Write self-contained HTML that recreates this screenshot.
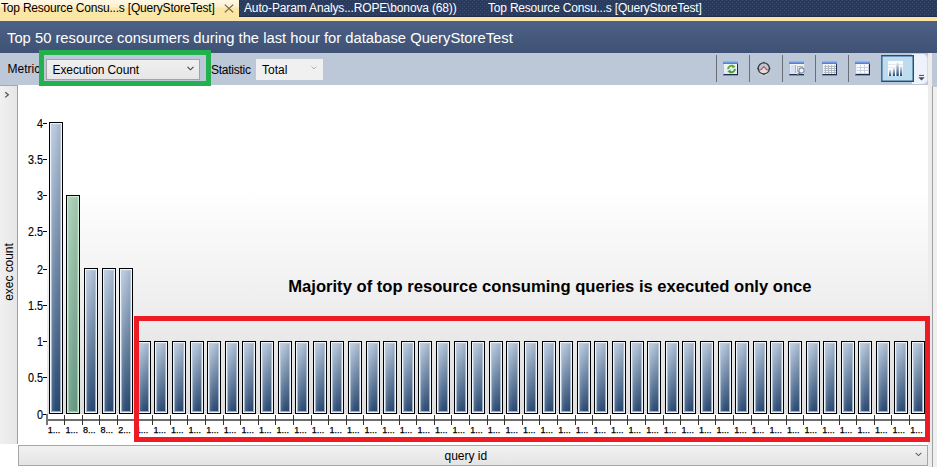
<!DOCTYPE html><html><head><meta charset="utf-8"><style>
*{margin:0;padding:0;box-sizing:border-box}
html,body{width:937px;height:467px;overflow:hidden;background:#fff}
body{position:relative;font-family:"Liberation Sans",sans-serif;}
.a{position:absolute}
.t{position:absolute;white-space:pre;line-height:1}
.bar{position:absolute;border:1px solid #000;}
.bar i{position:absolute;left:0;top:0;right:0;bottom:0;border:1px solid #eef3f9;box-shadow:inset 0 0 0 1px rgba(190,206,226,.75);
 background:linear-gradient(90deg,rgba(255,255,255,.18),rgba(255,255,255,0) 45%,rgba(0,0,0,.10)),linear-gradient(180deg,#b6c7db,#2b4b73);}
.bar.g i{border-color:#cdeed6;box-shadow:inset 0 0 0 1px rgba(170,215,185,.7);background:linear-gradient(90deg,rgba(255,255,255,.15),rgba(255,255,255,0) 45%,rgba(0,0,0,.06)),linear-gradient(180deg,#a9cdb6,#6a9a86);}
.sh{position:absolute;background:rgba(0,0,0,.09)}
.yl{position:absolute;font-size:12px;-webkit-text-stroke:0.15px #000;transform:scaleX(0.9);transform-origin:100% 50%;line-height:1;text-align:right;width:30px;color:#000}
.xl{position:absolute;font-size:9px;line-height:1;color:#000;white-space:pre;-webkit-text-stroke:0.25px #000}
.tk{position:absolute;background:#555}
.sep{position:absolute;top:55px;width:1px;height:27px;background:#6a6e75}
</style></head><body>
<svg class="a" style="left:0;top:0" width="937" height="17"><defs><pattern id="dots" width="4" height="4" patternUnits="userSpaceOnUse"><rect width="4" height="4" fill="#2a3a5a"/><rect x="2" y="0" width="1" height="1" fill="#3a4d71"/><rect x="0" y="2" width="1" height="1" fill="#3a4d71"/></pattern></defs><rect width="937" height="17" fill="url(#dots)"/></svg>
<div class="a" style="left:0;top:16px;width:937px;height:1px;background:#22304c"></div>
<div class="a" style="left:0;top:0;width:239px;height:17px;background:linear-gradient(180deg,#fff8e6 0,#fdf0cf 7px,#fbe6a6 8px,#fbe6a6 17px)"></div>
<div class="a" style="left:0;top:17px;width:937px;height:4px;background:#f9e5a5"></div>
<div class="t" style="left:1px;top:2px;font-size:12px;color:#000;letter-spacing:-0.2px">Top Resource Consu...s [QueryStoreTest]</div>
<svg class="a" style="left:224px;top:4px" width="10" height="9" viewBox="0 0 10 9"><path d="M0.8 0.6 L9.2 8.4 M9.2 0.6 L0.8 8.4" stroke="#6e6048" stroke-width="1.15"/></svg>
<div class="t" style="left:244px;top:2px;font-size:12px;color:#fff;letter-spacing:-0.15px">Auto-Param Analys...ROPE\bonova (68))</div>
<div class="t" style="left:488px;top:2px;font-size:12px;color:#fff;letter-spacing:-0.2px">Top Resource Consu...s [QueryStoreTest]</div>
<div class="a" style="left:0;top:21px;width:937px;height:32px;background:linear-gradient(180deg,#4d6186,#3f5275)"></div>
<div class="t" style="left:7px;top:30.4px;font-size:15.5px;color:#fff;transform:scaleX(0.953);transform-origin:0 0">Top 50 resource consumers during the last hour for database QueryStoreTest</div>
<div class="a" style="left:0;top:53px;width:928px;height:32px;background:#bcc7d8"></div>
<div class="a" style="left:932px;top:53px;width:5px;height:33px;background:#bcc7d8"></div>
<div class="a" style="left:928px;top:53px;width:4px;height:414px;background:#ececec"></div>
<div class="t" style="left:7.5px;top:63.2px;font-size:12px;color:#000">Metric</div>
<div class="a" style="left:46px;top:59px;width:154px;height:21px;border:1px solid #a3a3a3;background:linear-gradient(180deg,#f0f0f0,#e6e6e6)"></div>
<div class="t" style="left:52.5px;top:63.6px;font-size:12px;color:#000;letter-spacing:-0.1px">Execution Count</div>
<svg class="a" style="left:187px;top:66px" width="7" height="5" viewBox="0 0 7 5"><path d="M0.5 0.8 L3.5 3.8 L6.5 0.8" fill="none" stroke="#444" stroke-width="1.1"/></svg>
<div class="a" style="left:39px;top:50px;width:172px;height:36px;border:5px solid #22b14c"></div>
<div class="t" style="left:211px;top:63.6px;font-size:12px;color:#000;letter-spacing:-0.25px">Statistic</div>
<div class="a" style="left:256px;top:59px;width:67px;height:21px;background:#f0f0f0"></div>
<div class="t" style="left:262px;top:63.6px;font-size:12px;color:#000">Total</div>
<svg class="a" style="left:311px;top:66px" width="6" height="4" viewBox="0 0 6 4"><path d="M0.5 0.5 L3 3 L5.5 0.5" fill="none" stroke="#b0b0b0" stroke-width="1"/></svg>
<div class="sep" style="left:716px"></div>
<div class="sep" style="left:749px"></div>
<div class="sep" style="left:782px"></div>
<div class="sep" style="left:815px"></div>
<div class="sep" style="left:848px"></div>
<div class="a" style="left:723px;top:61px;width:15px;height:14px;border-left:1px solid #b8c4d6;border-right:1px solid #1c2c4c;border-bottom:1px solid #1c2c4c;box-shadow:0 1px 0 rgba(40,55,85,.35);background:linear-gradient(180deg,#f6f8fb,#e2e8f2)"><div class="a" style="left:-1px;top:0;width:15px;height:3px;background:linear-gradient(180deg,#9cc0f6,#3f74dc)"></div><svg class="a" style="left:2px;top:3px" width="11" height="10" viewBox="0 0 11 10"><path d="M2.2 5.2 A3.2 3.2 0 0 1 7.6 2.6" fill="none" stroke="#5cae3c" stroke-width="2"/><path d="M8.8 4.8 A3.2 3.2 0 0 1 3.4 7.4" fill="none" stroke="#4a9e2e" stroke-width="2"/><path d="M6 0.6 L9.6 2.6 L6.6 4.6Z" fill="#5cae3c"/><path d="M5 9.4 L1.4 7.4 L4.4 5.4Z" fill="#4a9e2e"/></svg></div>
<svg class="a" style="left:756px;top:61px" width="16" height="16" viewBox="0 0 16 16"><path d="M2.2 9 L5 9 L7.8 6 L10.6 9 L13.4 9 A5.6 5.6 0 0 1 2.2 9Z" fill="#dedede"/><path d="M2.3 8.8 L5 8.6 L7.8 5.6 L10.6 8.6 L13.3 8.8" fill="none" stroke="#c65555" stroke-width="1.2"/><circle cx="7.8" cy="7.4" r="5.6" fill="none" stroke="#3a3a3a" stroke-width="1.3"/><path d="M7.8 0.8 V2 M7.8 12.8 V14 M1.2 7.4 H2.4 M13.2 7.4 H14.4" stroke="#3a3a3a" stroke-width="1.1"/></svg>
<div class="a" style="left:789px;top:61px;width:15px;height:14px;border-left:1px solid #b8c4d6;border-bottom:1px solid #1c2c4c;box-shadow:0 1px 0 rgba(40,55,85,.35);background:linear-gradient(180deg,#f6f8fb,#e2e8f2)"><div class="a" style="left:-1px;top:0;width:15px;height:3px;background:linear-gradient(180deg,#9cc0f6,#3f74dc)"></div><div class="a" style="left:1px;top:4px;width:5px;height:8px;background:#d4e2f6;border-right:1px solid #a8b8d0"></div><div class="a" style="left:7px;top:5px;width:6px;height:6px;background:#f2f0e6;border:1px solid #b8b8a8"></div><svg class="a" style="left:6px;top:6px" width="10" height="9" viewBox="0 0 10 9"><circle cx="5.5" cy="3.5" r="2.6" fill="#eef3f8" stroke="#8090a8" stroke-width="1.1"/><path d="M3.8 5.5 L1 8.5" stroke="#6a7890" stroke-width="1.6"/></svg></div>
<div class="a" style="left:822px;top:61px;width:15px;height:14px;border-left:1px solid #b8c4d6;border-right:1px solid #1c2c4c;border-bottom:1px solid #1c2c4c;box-shadow:0 1px 0 rgba(40,55,85,.35);background:linear-gradient(180deg,#f6f8fb,#e2e8f2)"><div class="a" style="left:-1px;top:0;width:15px;height:3px;background:linear-gradient(180deg,#9cc0f6,#3f74dc)"></div><div class="a" style="left:1px;top:4px;width:12px;height:9px;background-color:#f6f6f6;background-image:linear-gradient(90deg,#b4bac2 1px,transparent 1px),linear-gradient(180deg,#b4bac2 1px,transparent 1px);background-size:3px 2px;background-position:1px 1px"></div></div>
<div class="a" style="left:855px;top:61px;width:15px;height:14px;border-left:1px solid #b8c4d6;border-right:1px solid #1c2c4c;border-bottom:1px solid #1c2c4c;box-shadow:0 1px 0 rgba(40,55,85,.35);background:linear-gradient(180deg,#f6f8fb,#e2e8f2)"><div class="a" style="left:-1px;top:0;width:15px;height:3px;background:linear-gradient(180deg,#9cc0f6,#3f74dc)"></div><div class="a" style="left:1px;top:4px;width:12px;height:9px;background-color:#fafbfd;background-image:linear-gradient(90deg,#c8d2e2 1px,transparent 1px),linear-gradient(180deg,#c8d2e2 1px,transparent 1px);background-size:4px 3px;background-position:3px 2px"></div></div>
<div class="a" style="left:912px;top:54px;width:16px;height:30px;background:#edf2fb;border-radius:0 5px 5px 0;border-right:1px solid #d4dbe8"></div>
<div class="a" style="left:881px;top:55px;width:33px;height:27px;border:1px solid #1d4f80;border-left-color:#4a6a8a;background:#bddcef;box-shadow:inset 0 0 0 0.5px #2a5a88"></div>
<svg class="a" style="left:888px;top:61px" width="15" height="15" viewBox="0 0 15 15"><defs><linearGradient id="cg" x1="0" y1="0" x2="0" y2="1"><stop offset="0" stop-color="#ffffff"/><stop offset="1" stop-color="#1a4478"/></linearGradient></defs><rect x="0" y="0" width="15" height="15" fill="#fbfcfd"/><path d="M0 3.5 H15 M0 6.5 H15" stroke="#e6e9ee" stroke-width="1"/><rect x="1" y="8" width="2.2" height="7" fill="url(#cg)"/><rect x="4.8" y="6" width="2.2" height="9" fill="url(#cg)"/><rect x="8.4" y="0.5" width="2.4" height="14.5" fill="url(#cg)"/><rect x="12" y="4.5" width="2.2" height="10.5" fill="url(#cg)"/></svg>
<svg class="a" style="left:918px;top:74px" width="7" height="7" viewBox="0 0 7 7"><path d="M1 1.4 H6" stroke="#4a4a4a" stroke-width="1"/><path d="M0.3 3.2 H6.7 L3.5 6.6Z" fill="#4a4a4a"/></svg>
<div class="a" style="left:0;top:85px;width:18px;height:359px;background:linear-gradient(90deg,#f0f0f0,#e6e6e6);border-top:1px solid #a8a8a8;border-right:1px solid #a0a0a0"></div>
<svg class="a" style="left:4px;top:91px" width="6" height="8" viewBox="0 0 6 8"><path d="M1.2 1.2 L4.4 3.8 L1.2 6.4" fill="none" stroke="#505050" stroke-width="1.2"/></svg>
<div class="a" style="left:932px;top:86px;width:5px;height:381px;background:#f0f0f0;border-left:1px solid #a0a0a0;border-top:1px solid #c8c8c8"></div>
<div class="a" style="left:47px;top:190px;width:881px;height:224px;background:linear-gradient(180deg,#ffffff 0,#dedede 100%)"></div>
<div class="t" style="left:-21px;top:266px;width:60px;font-size:12px;color:#000;transform:rotate(-90deg);text-align:center;letter-spacing:-0.05px">exec count</div>
<div class="tk" style="left:43px;top:414px;width:4px;height:1px;background:#000"></div>
<div class="yl" style="left:12.8px;top:408.7px">0</div>
<div class="tk" style="left:43px;top:377px;width:4px;height:1px;background:#000"></div>
<div class="yl" style="left:12.8px;top:371.7px">0.5</div>
<div class="tk" style="left:43px;top:341px;width:4px;height:1px;background:#000"></div>
<div class="yl" style="left:12.8px;top:335.7px">1</div>
<div class="tk" style="left:43px;top:305px;width:4px;height:1px;background:#000"></div>
<div class="yl" style="left:12.8px;top:299.7px">1.5</div>
<div class="tk" style="left:43px;top:269px;width:4px;height:1px;background:#000"></div>
<div class="yl" style="left:12.8px;top:263.7px">2</div>
<div class="tk" style="left:43px;top:231px;width:4px;height:1px;background:#000"></div>
<div class="yl" style="left:12.8px;top:225.7px">2.5</div>
<div class="tk" style="left:43px;top:195px;width:4px;height:1px;background:#000"></div>
<div class="yl" style="left:12.8px;top:189.7px">3</div>
<div class="tk" style="left:43px;top:159px;width:4px;height:1px;background:#000"></div>
<div class="yl" style="left:12.8px;top:153.7px">3.5</div>
<div class="tk" style="left:43px;top:123px;width:4px;height:1px;background:#000"></div>
<div class="yl" style="left:12.8px;top:117.7px">4</div>
<div class="bar" style="left:49px;top:122px;width:14px;height:292px"><i></i></div>
<div class="bar g" style="left:66px;top:195px;width:14px;height:219px"><i></i></div>
<div class="bar" style="left:84px;top:268px;width:14px;height:146px"><i></i></div>
<div class="bar" style="left:102px;top:268px;width:14px;height:146px"><i></i></div>
<div class="bar" style="left:119px;top:268px;width:14px;height:146px"><i></i></div>
<div class="bar" style="left:137px;top:341px;width:14px;height:73px"><i></i></div>
<div class="bar" style="left:154px;top:341px;width:14px;height:73px"><i></i></div>
<div class="bar" style="left:172px;top:341px;width:14px;height:73px"><i></i></div>
<div class="bar" style="left:190px;top:341px;width:14px;height:73px"><i></i></div>
<div class="bar" style="left:207px;top:341px;width:14px;height:73px"><i></i></div>
<div class="bar" style="left:225px;top:341px;width:14px;height:73px"><i></i></div>
<div class="bar" style="left:242px;top:341px;width:14px;height:73px"><i></i></div>
<div class="bar" style="left:260px;top:341px;width:14px;height:73px"><i></i></div>
<div class="bar" style="left:278px;top:341px;width:14px;height:73px"><i></i></div>
<div class="bar" style="left:295px;top:341px;width:14px;height:73px"><i></i></div>
<div class="bar" style="left:313px;top:341px;width:14px;height:73px"><i></i></div>
<div class="bar" style="left:330px;top:341px;width:14px;height:73px"><i></i></div>
<div class="bar" style="left:348px;top:341px;width:14px;height:73px"><i></i></div>
<div class="bar" style="left:366px;top:341px;width:14px;height:73px"><i></i></div>
<div class="bar" style="left:383px;top:341px;width:14px;height:73px"><i></i></div>
<div class="bar" style="left:401px;top:341px;width:14px;height:73px"><i></i></div>
<div class="bar" style="left:418px;top:341px;width:14px;height:73px"><i></i></div>
<div class="bar" style="left:436px;top:341px;width:14px;height:73px"><i></i></div>
<div class="bar" style="left:454px;top:341px;width:14px;height:73px"><i></i></div>
<div class="bar" style="left:471px;top:341px;width:14px;height:73px"><i></i></div>
<div class="bar" style="left:489px;top:341px;width:14px;height:73px"><i></i></div>
<div class="bar" style="left:506px;top:341px;width:14px;height:73px"><i></i></div>
<div class="bar" style="left:524px;top:341px;width:14px;height:73px"><i></i></div>
<div class="bar" style="left:542px;top:341px;width:14px;height:73px"><i></i></div>
<div class="bar" style="left:559px;top:341px;width:14px;height:73px"><i></i></div>
<div class="bar" style="left:577px;top:341px;width:14px;height:73px"><i></i></div>
<div class="bar" style="left:594px;top:341px;width:14px;height:73px"><i></i></div>
<div class="bar" style="left:612px;top:341px;width:14px;height:73px"><i></i></div>
<div class="bar" style="left:630px;top:341px;width:14px;height:73px"><i></i></div>
<div class="bar" style="left:647px;top:341px;width:14px;height:73px"><i></i></div>
<div class="bar" style="left:665px;top:341px;width:14px;height:73px"><i></i></div>
<div class="bar" style="left:682px;top:341px;width:14px;height:73px"><i></i></div>
<div class="bar" style="left:700px;top:341px;width:14px;height:73px"><i></i></div>
<div class="bar" style="left:718px;top:341px;width:14px;height:73px"><i></i></div>
<div class="bar" style="left:735px;top:341px;width:14px;height:73px"><i></i></div>
<div class="bar" style="left:753px;top:341px;width:14px;height:73px"><i></i></div>
<div class="bar" style="left:770px;top:341px;width:14px;height:73px"><i></i></div>
<div class="bar" style="left:788px;top:341px;width:14px;height:73px"><i></i></div>
<div class="bar" style="left:806px;top:341px;width:14px;height:73px"><i></i></div>
<div class="bar" style="left:823px;top:341px;width:14px;height:73px"><i></i></div>
<div class="bar" style="left:841px;top:341px;width:14px;height:73px"><i></i></div>
<div class="bar" style="left:858px;top:341px;width:14px;height:73px"><i></i></div>
<div class="bar" style="left:876px;top:341px;width:14px;height:73px"><i></i></div>
<div class="bar" style="left:894px;top:341px;width:14px;height:73px"><i></i></div>
<div class="bar" style="left:911px;top:341px;width:14px;height:73px"><i></i></div>
<div class="a" style="left:47px;top:419px;width:880px;height:2px;background:#6e6e6e"></div>
<div class="tk" style="left:47px;top:415px;width:1px;height:10px;background:#333"></div>
<div class="xl" style="left:47.8px;top:426px">1...</div>
<div class="tk" style="left:64px;top:415px;width:1px;height:10px;background:#333"></div>
<div class="xl" style="left:65.4px;top:426px">1...</div>
<div class="tk" style="left:82px;top:415px;width:1px;height:10px;background:#333"></div>
<div class="xl" style="left:83.0px;top:426px">8...</div>
<div class="tk" style="left:99px;top:415px;width:1px;height:10px;background:#333"></div>
<div class="xl" style="left:100.6px;top:426px">8...</div>
<div class="tk" style="left:117px;top:415px;width:1px;height:10px;background:#333"></div>
<div class="xl" style="left:118.2px;top:426px">2...</div>
<div class="tk" style="left:135px;top:415px;width:1px;height:10px;background:#333"></div>
<div class="xl" style="left:135.8px;top:426px">1...</div>
<div class="tk" style="left:152px;top:415px;width:1px;height:10px;background:#333"></div>
<div class="xl" style="left:153.4px;top:426px">1...</div>
<div class="tk" style="left:170px;top:415px;width:1px;height:10px;background:#333"></div>
<div class="xl" style="left:171.0px;top:426px">1...</div>
<div class="tk" style="left:187px;top:415px;width:1px;height:10px;background:#333"></div>
<div class="xl" style="left:188.6px;top:426px">1...</div>
<div class="tk" style="left:205px;top:415px;width:1px;height:10px;background:#333"></div>
<div class="xl" style="left:206.2px;top:426px">1...</div>
<div class="tk" style="left:223px;top:415px;width:1px;height:10px;background:#333"></div>
<div class="xl" style="left:223.8px;top:426px">1...</div>
<div class="tk" style="left:240px;top:415px;width:1px;height:10px;background:#333"></div>
<div class="xl" style="left:241.4px;top:426px">1...</div>
<div class="tk" style="left:258px;top:415px;width:1px;height:10px;background:#333"></div>
<div class="xl" style="left:259.0px;top:426px">1...</div>
<div class="tk" style="left:275px;top:415px;width:1px;height:10px;background:#333"></div>
<div class="xl" style="left:276.6px;top:426px">1...</div>
<div class="tk" style="left:293px;top:415px;width:1px;height:10px;background:#333"></div>
<div class="xl" style="left:294.2px;top:426px">1...</div>
<div class="tk" style="left:311px;top:415px;width:1px;height:10px;background:#333"></div>
<div class="xl" style="left:311.8px;top:426px">1...</div>
<div class="tk" style="left:328px;top:415px;width:1px;height:10px;background:#333"></div>
<div class="xl" style="left:329.4px;top:426px">1...</div>
<div class="tk" style="left:346px;top:415px;width:1px;height:10px;background:#333"></div>
<div class="xl" style="left:347.0px;top:426px">1...</div>
<div class="tk" style="left:363px;top:415px;width:1px;height:10px;background:#333"></div>
<div class="xl" style="left:364.6px;top:426px">1...</div>
<div class="tk" style="left:381px;top:415px;width:1px;height:10px;background:#333"></div>
<div class="xl" style="left:382.2px;top:426px">1...</div>
<div class="tk" style="left:399px;top:415px;width:1px;height:10px;background:#333"></div>
<div class="xl" style="left:399.8px;top:426px">1...</div>
<div class="tk" style="left:416px;top:415px;width:1px;height:10px;background:#333"></div>
<div class="xl" style="left:417.4px;top:426px">1...</div>
<div class="tk" style="left:434px;top:415px;width:1px;height:10px;background:#333"></div>
<div class="xl" style="left:435.0px;top:426px">1...</div>
<div class="tk" style="left:451px;top:415px;width:1px;height:10px;background:#333"></div>
<div class="xl" style="left:452.6px;top:426px">1...</div>
<div class="tk" style="left:469px;top:415px;width:1px;height:10px;background:#333"></div>
<div class="xl" style="left:470.2px;top:426px">1...</div>
<div class="tk" style="left:487px;top:415px;width:1px;height:10px;background:#333"></div>
<div class="xl" style="left:487.8px;top:426px">1...</div>
<div class="tk" style="left:504px;top:415px;width:1px;height:10px;background:#333"></div>
<div class="xl" style="left:505.4px;top:426px">1...</div>
<div class="tk" style="left:522px;top:415px;width:1px;height:10px;background:#333"></div>
<div class="xl" style="left:523.0px;top:426px">1...</div>
<div class="tk" style="left:539px;top:415px;width:1px;height:10px;background:#333"></div>
<div class="xl" style="left:540.6px;top:426px">1...</div>
<div class="tk" style="left:557px;top:415px;width:1px;height:10px;background:#333"></div>
<div class="xl" style="left:558.2px;top:426px">1...</div>
<div class="tk" style="left:575px;top:415px;width:1px;height:10px;background:#333"></div>
<div class="xl" style="left:575.8px;top:426px">1...</div>
<div class="tk" style="left:592px;top:415px;width:1px;height:10px;background:#333"></div>
<div class="xl" style="left:593.4px;top:426px">1...</div>
<div class="tk" style="left:610px;top:415px;width:1px;height:10px;background:#333"></div>
<div class="xl" style="left:611.0px;top:426px">1...</div>
<div class="tk" style="left:627px;top:415px;width:1px;height:10px;background:#333"></div>
<div class="xl" style="left:628.6px;top:426px">1...</div>
<div class="tk" style="left:645px;top:415px;width:1px;height:10px;background:#333"></div>
<div class="xl" style="left:646.2px;top:426px">1...</div>
<div class="tk" style="left:663px;top:415px;width:1px;height:10px;background:#333"></div>
<div class="xl" style="left:663.8px;top:426px">1...</div>
<div class="tk" style="left:680px;top:415px;width:1px;height:10px;background:#333"></div>
<div class="xl" style="left:681.4px;top:426px">1...</div>
<div class="tk" style="left:698px;top:415px;width:1px;height:10px;background:#333"></div>
<div class="xl" style="left:699.0px;top:426px">1...</div>
<div class="tk" style="left:715px;top:415px;width:1px;height:10px;background:#333"></div>
<div class="xl" style="left:716.6px;top:426px">1...</div>
<div class="tk" style="left:733px;top:415px;width:1px;height:10px;background:#333"></div>
<div class="xl" style="left:734.2px;top:426px">1...</div>
<div class="tk" style="left:751px;top:415px;width:1px;height:10px;background:#333"></div>
<div class="xl" style="left:751.8px;top:426px">1...</div>
<div class="tk" style="left:768px;top:415px;width:1px;height:10px;background:#333"></div>
<div class="xl" style="left:769.4px;top:426px">1...</div>
<div class="tk" style="left:786px;top:415px;width:1px;height:10px;background:#333"></div>
<div class="xl" style="left:787.0px;top:426px">1...</div>
<div class="tk" style="left:803px;top:415px;width:1px;height:10px;background:#333"></div>
<div class="xl" style="left:804.6px;top:426px">1...</div>
<div class="tk" style="left:821px;top:415px;width:1px;height:10px;background:#333"></div>
<div class="xl" style="left:822.2px;top:426px">1...</div>
<div class="tk" style="left:839px;top:415px;width:1px;height:10px;background:#333"></div>
<div class="xl" style="left:839.8px;top:426px">1...</div>
<div class="tk" style="left:856px;top:415px;width:1px;height:10px;background:#333"></div>
<div class="xl" style="left:857.4px;top:426px">1...</div>
<div class="tk" style="left:874px;top:415px;width:1px;height:10px;background:#333"></div>
<div class="xl" style="left:875.0px;top:426px">1...</div>
<div class="tk" style="left:891px;top:415px;width:1px;height:10px;background:#333"></div>
<div class="xl" style="left:892.6px;top:426px">1...</div>
<div class="tk" style="left:909px;top:415px;width:1px;height:10px;background:#333"></div>
<div class="xl" style="left:910.2px;top:426px">1...</div>
<div class="tk" style="left:46px;top:414px;width:2px;height:11px;background:#777"></div>
<div class="t" style="left:288.2px;top:279px;font-size:16.63px;font-weight:bold;color:#000">Majority of top resource consuming queries is executed only once</div>
<div class="a" style="left:134px;top:316px;width:796px;height:126px;border:5px solid #ed1c24"></div>
<div class="a" style="left:18px;top:445px;width:910px;height:21px;border:1px solid #a6a6a6;background:linear-gradient(180deg,#f2f2f2,#e4e4e4)"></div>
<div class="t" style="left:444.5px;top:449.8px;font-size:12px;color:#000">query id</div>
<svg class="a" style="left:915px;top:452px" width="7" height="5" viewBox="0 0 7 5"><path d="M0.7 0.8 L3.5 3.6 L6.3 0.8" fill="none" stroke="#606060" stroke-width="1.05"/></svg>
</body></html>
